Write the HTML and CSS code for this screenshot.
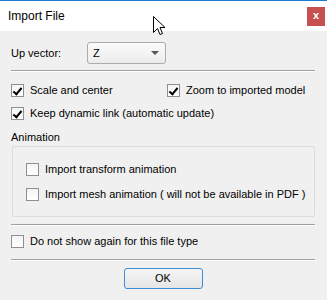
FILE: index.html
```html
<!DOCTYPE html>
<html lang="en">
<head>
    <meta charset="UTF-8">
    <title>Import File</title>
    <link rel="stylesheet" href="styles.css">
</head>
<body>
    <div class="window">
        <div class="titlebar">
            <span class="title">Import File</span>
            <div class="close">x</div>
        </div>
        <div class="content">
            <div class="upvector">
                <span class="label">Up vector:</span>
                <div class="select">
                    <span>Z</span>
                    <span class="arrow"></span>
                </div>
            </div>
            <div class="sep"></div>
            <div class="row first">
                <label class="check col"><span class="box on"></span>Scale and center</label>
                <label class="check"><span class="box on"></span>Zoom to imported model</label>
            </div>
            <div class="row second">
                <label class="check"><span class="box on"></span>Keep dynamic link (automatic update)</label>
            </div>
            <div class="section">Animation</div>
            <div class="group">
                <label class="check"><span class="box"></span>Import transform animation</label>
                <label class="check gap"><span class="box"></span>Import mesh animation ( will not be available in PDF )</label>
            </div>
            <div class="sep sep2"></div>
            <div class="row third">
                <label class="check"><span class="box"></span>Do not show again for this file type</label>
            </div>
            <div class="sep sep3"></div>
            <div class="buttons">
                <div class="btn">OK</div>
            </div>
        </div>
        <svg class="cursor" width="13" height="20" viewBox="0 0 13 20">
            <path d="M0.5 0.5 L0.5 16.5 L4.5 12.5 L7 18.5 L9.5 17.5 L7 11.5 L12 11.5 Z" fill="#fff" stroke="#000" stroke-width="1"/>
        </svg>
    </div>
</body>
</html>
```

FILE: styles.css
```css
*{
    margin: 0;
    padding: 0;
    box-sizing: border-box;
}
body{
    background: #f0f0f0;
    font-family: "Liberation Sans", Arial, sans-serif;
    font-size: 11px;
    color: #000;
}
.window{
    width: 327px;
    height: 300px;
    position: relative;
    background: #f0f0f0;
}
.titlebar{
    height: 31px;
    background: #fff;
    border-top: 1px solid #1a7bd0;
    display: flex;
    align-items: center;
    justify-content: space-between;
    padding: 0 2px 0 8px;
}
.title{
    font-size: 12px;
    margin-top: -1px;
}
.close{
    width: 18px;
    height: 19px;
    background: #c75050;
    color: #fff;
    font-weight: bold;
    font-size: 11px;
    line-height: 17px;
    text-align: center;
}
.content{
    padding: 11px 12px 0 11px;
}
.upvector{
    display: flex;
    align-items: center;
    height: 22px;
}
.label{
    width: 76px;
}
.select{
    width: 79px;
    height: 22px;
    border: 1px solid #acacac;
    border-radius: 3px;
    background: linear-gradient(#fbfbfb, #ececec);
    display: flex;
    align-items: center;
    justify-content: space-between;
    padding: 0 6px 0 5px;
}
.arrow{
    width: 0;
    height: 0;
    border-left: 4px solid transparent;
    border-right: 4px solid transparent;
    border-top: 4px solid #555;
}
.sep{
    height: 2px;
    border-top: 1px solid #a0a0a0;
    border-bottom: 1px solid #fff;
    margin-top: 6px;
}
.sep2{
    margin-top: 7px;
}
.sep3{
    margin-top: 11px;
}
.row{
    display: flex;
}
.row.first{
    margin-top: 12px;
}
.row.second{
    margin-top: 10px;
}
.row.third{
    margin-top: 9px;
}
.check{
    display: flex;
    align-items: center;
    height: 13px;
    line-height: 13px;
    white-space: nowrap;
}
.col{
    width: 156px;
    flex: none;
}
.box{
    width: 13px;
    height: 13px;
    border: 1px solid #8f8f8f;
    background: linear-gradient(#f4f4f4, #fff);
    margin-right: 6px;
    position: relative;
    flex: none;
}
.box.on::after{
    content: "";
    position: absolute;
    left: 3px;
    top: 1px;
    width: 3px;
    height: 7px;
    border-right: 2px solid #000;
    border-bottom: 2px solid #000;
    transform: rotate(40deg);
}
.section{
    margin-top: 11px;
    height: 13px;
    line-height: 13px;
}
.group{
    margin: 2px 0 0 1px;
    height: 71px;
    border: 1px solid #dcdcdc;
    border-radius: 2px;
    padding: 16px 0 0 13px;
}
.group .gap{
    margin-top: 12px;
}
.buttons{
    display: flex;
    justify-content: center;
    margin-top: 7px;
}
.btn{
    width: 79px;
    height: 21px;
    border: 1px solid #3c8fd6;
    border-radius: 3px;
    background: linear-gradient(#f4f4f4, #e6e6e6);
    text-align: center;
    line-height: 19px;
}
.cursor{
    position: absolute;
    left: 153px;
    top: 16px;
}
```
